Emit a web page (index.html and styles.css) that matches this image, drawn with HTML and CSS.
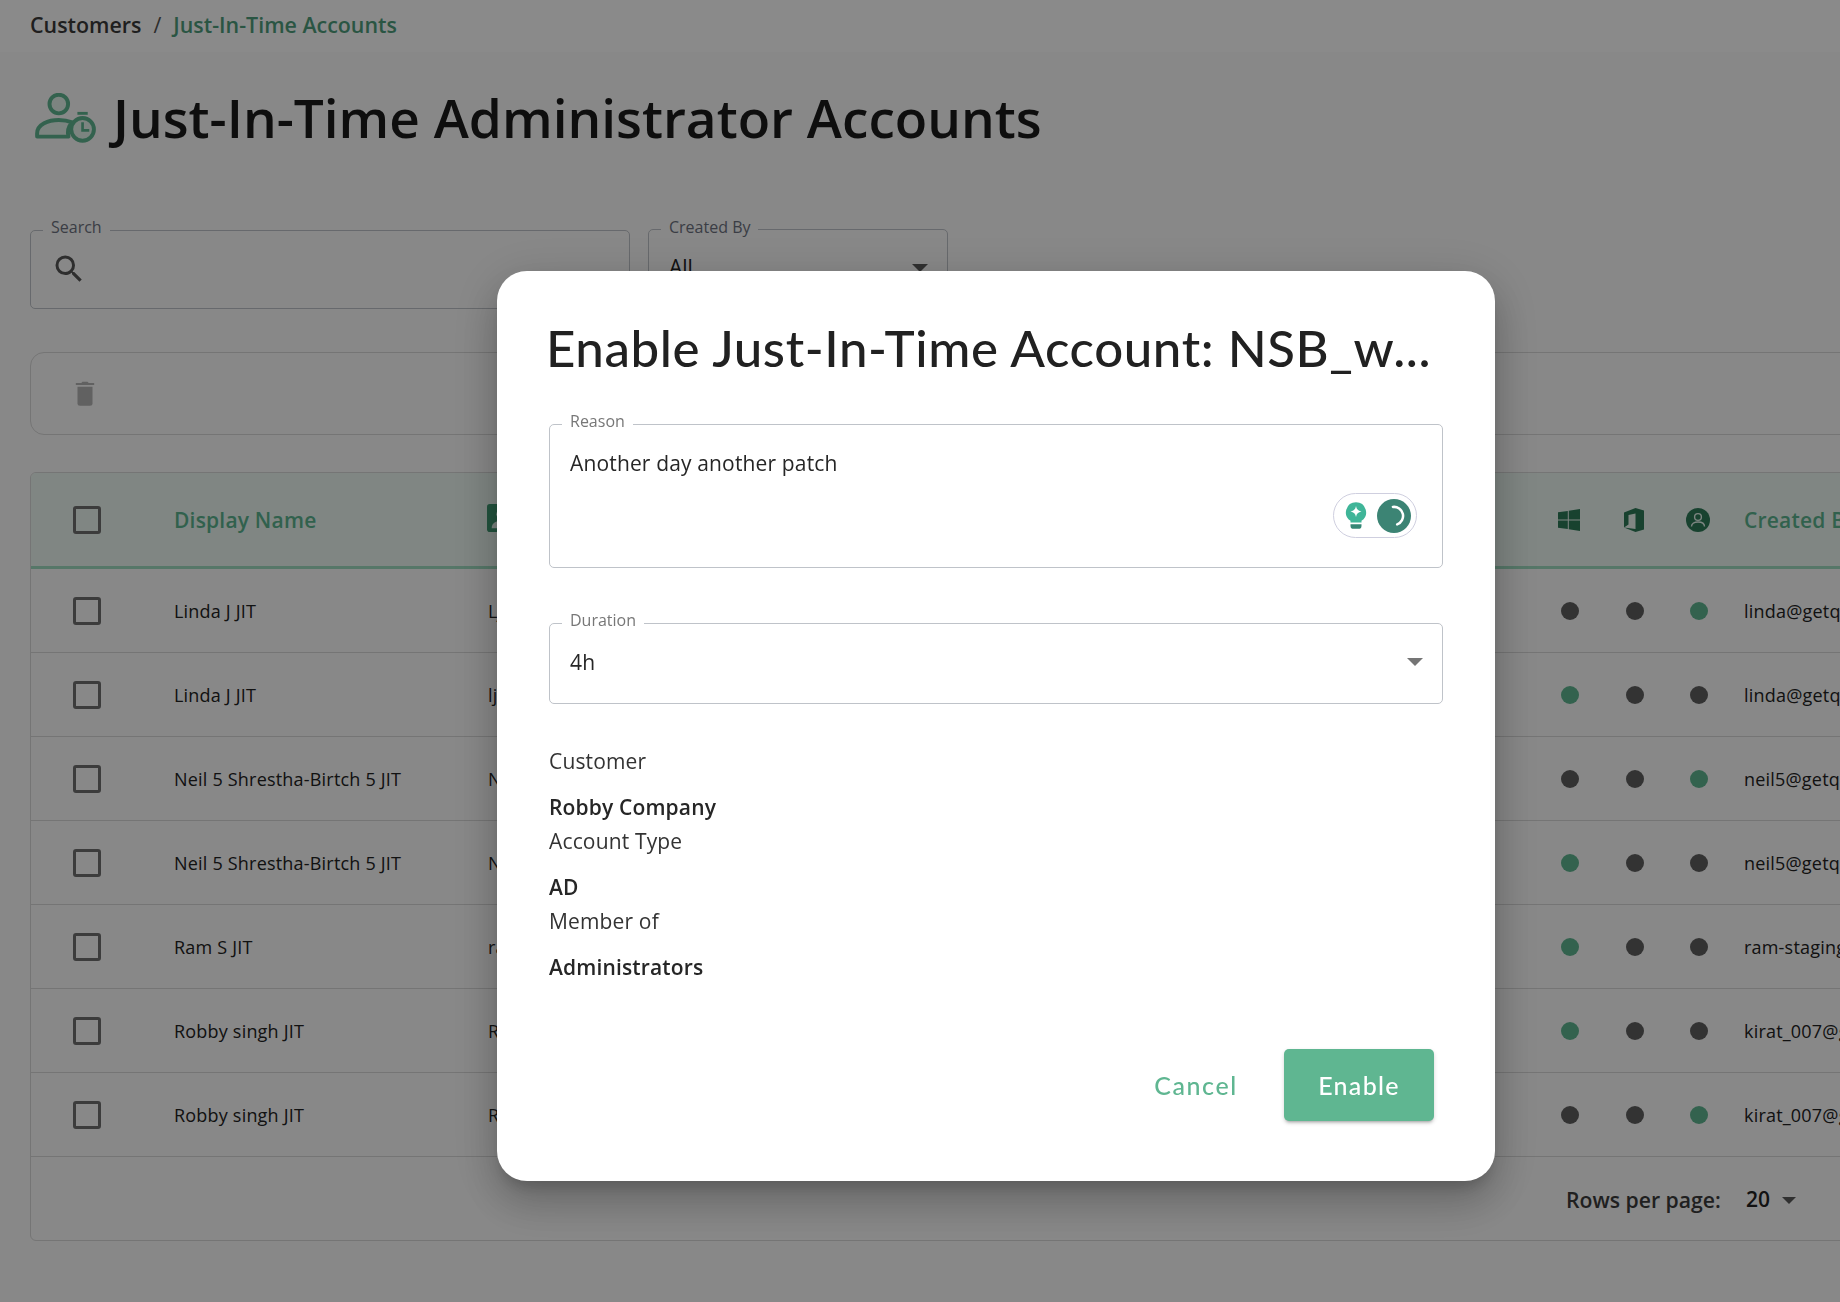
FILE: index.html
```html
<!DOCTYPE html>
<html lang="en">
<head>
<meta charset="utf-8">
<title>Just-In-Time Administrator Accounts</title>
<link rel="stylesheet" href="styles.css">
</head>
<body>
<div class="page">
  <nav class="crumbs"><span>Customers</span><span class="sep">/</span><span class="crumb-active">Just-In-Time Accounts</span></nav>
  <main class="content">
    <header class="heading">
      <svg class="heading-icon" viewBox="0 0 60 48" fill="none" stroke="#5fb691" stroke-width="3.8">
        <circle cx="24" cy="10.5" r="9" fill="#e6f4ed"/>
        <path d="M3 42v-3c0-9 11-13 21-13 5 0 9 .8 13 2.300-3.500 3.700-5 8.500-3.600 13.700H3.500z" fill="#e6f4ed" stroke-linejoin="round"/>
        <circle cx="47" cy="35" r="11" fill="#e6f4ed"/>
        <path d="M47 28v8h6.500" stroke-width="2.600"/>
        <path d="M42 19.500h10" stroke-width="2.800"/>
      </svg>
      <h1>Just-In-Time Administrator Accounts</h1>
    </header>
    <section class="filters">
      <fieldset class="field field-search">
        <legend>Search</legend>
        <svg class="search-icon" viewBox="0 0 24 24"><path d="M15.500 14h-.79l-.28-.27A6.470 6.470 0 0 0 16 9.500 6.500 6.500 0 1 0 9.500 16c1.610 0 3.090-.59 4.230-1.570l.27.28v.79l5 4.990L20.490 19l-4.990-5zm-6 0C7.010 14 5 11.990 5 9.500S7.010 5 9.500 5 14 7.010 14 9.500 11.990 14 9.500 14z"/></svg>
      </fieldset>
      <fieldset class="field field-created">
        <legend>Created By</legend>
        <span class="select-value">All</span>
        <span class="caret caret-dark"></span>
      </fieldset>
    </section>
    <section class="toolbar">
      <svg class="trash" viewBox="0 0 24 32"><path d="M3 9h18v20a3 3 0 0 1-3 3H6a3 3 0 0 1-3-3z"/><path d="M1 4.500h6.500L9 3h6l1.500 1.500H23V7H1z"/></svg>
    </section>
    <section class="table">
      <div class="row row-head">
        <span class="box"></span>
        <span class="c-name">Display Name</span>
        <span class="c-user"><svg class="contact" viewBox="0 0 30 30"><rect width="30" height="30" rx="3"/><circle cx="15" cy="11" r="5" fill="#e8f6ef"/><path d="M5 26c0-6 5-8 10-8s10 2 10 8z" fill="#e8f6ef"/></svg></span>
        <span class="c-dot"><svg class="head-icon" viewBox="0 0 22 22"><path d="M0 3.300 9.800 2v8.500H0zM10.800 1.800 22 0v10.500H10.800zM0 11.500h9.800V20L0 18.700zM10.800 11.500H22V22l-11.200-1.800z"/></svg></span>
        <span class="c-dot"><svg class="head-icon head-office" viewBox="0 0 20 24"><path d="M0 4.500 11.500 0 20 2.500v19L11.500 24 0 19.500l11.500 1.500V5.500L4.500 7v9.500L0 19.500z"/></svg></span>
        <span class="c-dot"><svg class="head-icon head-person" viewBox="0 0 24 24"><circle cx="12" cy="12" r="12"/><circle cx="12" cy="9" r="3.400" fill="none" stroke="#e8f6ef" stroke-width="1.400"/><path d="M5.500 18.500c0-3 3-4.500 6.500-4.500s6.500 1.500 6.500 4.500" fill="none" stroke="#e8f6ef" stroke-width="1.400"/></svg></span>
        <span class="c-by">Created By</span>
      </div>
      <div class="row"><span class="box"></span><span class="c-name">Linda J JIT</span><span class="c-user">Lj_jit</span><span class="c-dot"><i class="dot"></i></span><span class="c-dot"><i class="dot"></i></span><span class="c-dot"><i class="dot on"></i></span><span class="c-by">linda@getquantum.io</span></div>
      <div class="row"><span class="box"></span><span class="c-name">Linda J JIT</span><span class="c-user">lj_jit</span><span class="c-dot"><i class="dot on"></i></span><span class="c-dot"><i class="dot"></i></span><span class="c-dot"><i class="dot"></i></span><span class="c-by">linda@getquantum.io</span></div>
      <div class="row"><span class="box"></span><span class="c-name">Neil 5 Shrestha-Birtch 5 JIT</span><span class="c-user">N5_jit</span><span class="c-dot"><i class="dot"></i></span><span class="c-dot"><i class="dot"></i></span><span class="c-dot"><i class="dot on"></i></span><span class="c-by">neil5@getquantum.io</span></div>
      <div class="row"><span class="box"></span><span class="c-name">Neil 5 Shrestha-Birtch 5 JIT</span><span class="c-user">N5_jit</span><span class="c-dot"><i class="dot on"></i></span><span class="c-dot"><i class="dot"></i></span><span class="c-dot"><i class="dot"></i></span><span class="c-by">neil5@getquantum.io</span></div>
      <div class="row"><span class="box"></span><span class="c-name">Ram S JIT</span><span class="c-user">ram_jit</span><span class="c-dot"><i class="dot on"></i></span><span class="c-dot"><i class="dot"></i></span><span class="c-dot"><i class="dot"></i></span><span class="c-by">ram-staging@getquantum.io</span></div>
      <div class="row"><span class="box"></span><span class="c-name">Robby singh JIT</span><span class="c-user">Robby_jit</span><span class="c-dot"><i class="dot on"></i></span><span class="c-dot"><i class="dot"></i></span><span class="c-dot"><i class="dot"></i></span><span class="c-by">kirat_007@getquantum.io</span></div>
      <div class="row"><span class="box"></span><span class="c-name">Robby singh JIT</span><span class="c-user">Robby_jit</span><span class="c-dot"><i class="dot"></i></span><span class="c-dot"><i class="dot"></i></span><span class="c-dot"><i class="dot on"></i></span><span class="c-by">kirat_007@getquantum.io</span></div>
      <div class="pager"><span class="pager-label">Rows per page:</span><span class="pager-value">20</span><span class="caret caret-dark"></span></div>
    </section>
  </main>
</div>
<div class="scrim">
  <div class="dialog">
    <h2>Enable Just-In-Time Account: NSB_w...</h2>
    <fieldset class="field field-reason">
      <legend>Reason</legend>
      <p class="field-text">Another day another patch</p>
      <div class="assist">
        <svg class="bulb" viewBox="0 0 24 30"><path d="M12 0a11 11 0 0 0-6 20.200V22h12v-1.800A11 11 0 0 0 12 0z" fill="#3fb598"/><path d="M12 4c.7 3.700 2.300 5.300 6 6-3.700.7-5.300 2.300-6 6-.7-3.700-2.300-5.300-6-6 3.700-.7 5.300-2.300 6-6z" fill="#fff"/><path d="M6 24h12v1.500a3.500 3.500 0 0 1-3.500 3.500h-5A3.500 3.500 0 0 1 6 25.500z" fill="#358775"/></svg>
        <svg class="spin" viewBox="0 0 32 32"><circle cx="16" cy="16" r="16" fill="#3c8474"/><path d="M15 7.500a8.500 8.500 0 0 1 4 16.400" fill="none" stroke="#fff" stroke-width="2.400" stroke-linecap="round"/></svg>
      </div>
    </fieldset>
    <fieldset class="field field-duration">
      <legend>Duration</legend>
      <span class="field-text">4h</span>
      <span class="caret"></span>
    </fieldset>
    <dl class="facts">
      <dt>Customer</dt><dd>Robby Company</dd>
      <dt>Account Type</dt><dd>AD</dd>
      <dt>Member of</dt><dd>Administrators</dd>
    </dl>
    <div class="actions">
      <button class="btn btn-text" type="button">Cancel</button>
      <button class="btn btn-primary" type="button">Enable</button>
    </div>
  </div>
</div>
</body>
</html>
```
FILE: styles.css
```css
* { box-sizing: border-box; }
html, body { margin: 0; height: 100%; overflow: hidden; }
body { font-family: "Open Sans", "Noto Sans", sans-serif; color: #212121; background: #fbfbfb; }

.page { width: 1840px; height: 1302px; overflow: hidden; }

.crumbs { height: 52px; padding-top: 10px; background: #fff; display: flex; gap: 12px; padding-left: 30px; font-size: 21.400px; line-height: 30px; font-weight: 600; color: #3a3a3a; align-items: flex-start; }
.crumbs .sep { color: #555; font-weight: 400; }
.crumb-active { color: #4e9e7c; }

.content { padding: 0 0 0 30px; width: 2300px; }

.heading { height: 178px; display: flex; align-items: flex-start; padding-top: 33px; }
.heading-icon { width: 62px; height: 50px; margin: 8px 17px 0 4px; flex: none; }
h1 { margin: 0; font-size: 53.150px; line-height: 66px; font-weight: 600; color: #1a1a1a; }

.field { margin: 0; border: 1px solid #bfc3c9; border-radius: 5px; position: relative; min-inline-size: 0; padding: 0 20px; }
.field legend { position: relative; top: -3px; font-size: 16px; line-height: 15px; color: #6d7280; padding: 0 8px; margin-left: -8px; }

.filters { display: flex; gap: 18px; height: 122px; align-items: flex-start; }
.field-search { width: 600px; height: 86px; margin-top: -7px; }
.search-icon { width: 36px; height: 36px; fill: #555; position: absolute; left: 20px; top: 13px; }
.field-created { width: 300px; height: 87px; margin-top: -8px; }
.field-created legend { top: -2px; }
.select-value { position: absolute; left: 20px; top: 16px; font-size: 21px; }
.caret { position: absolute; right: 20px; top: 36px; width: 0; height: 0; border-left: 8px solid transparent; border-right: 8px solid transparent; border-top: 8px solid #757575; }
.field-created .caret { top: 27px; right: 19px; }
.caret-dark { border-top-color: #5a5a5a; }

.toolbar { width: 2200px; height: 83px; border: 1px solid #d8d8d8; border-radius: 14px; margin-bottom: 37px; display: flex; align-items: center; padding-left: 44px; }
.trash { width: 20px; height: 27px; fill: #b4b4b4; margin-top: -2px; }

.table { width: 2200px; border: 1px solid #d8d8d8; border-radius: 6px; overflow: hidden; height: 769px; }
.row { height: 84px; display: grid; grid-template-columns: 143px 312px 1052px 65px 65px 63px 1fr; align-items: center; border-bottom: 1px solid #d8d8d8; font-size: 18px; letter-spacing: .2px; color: #222; }
.row-head { height: 96px; background: #ecf8f2; border-bottom: 3px solid #9fdcc0; font-size: 21px; font-weight: 600; color: #5bb48f; }
.box { display: block; width: 28px; height: 28px; margin-left: 42px; border: 3px solid #707070; border-radius: 3px; }
.c-user { white-space: nowrap; padding-left: 2px; }
.c-dot { display: flex; justify-content: center; align-items: center; padding-right: 2px; }
.row-head .c-dot { padding-right: 4px; }
.c-by { white-space: nowrap; padding-left: 13px; }
.dot { display: block; width: 18px; height: 18px; border-radius: 50%; background: #5f5f5f; }
.dot.on { background: #5fb691; }
.contact { width: 28px; height: 28px; fill: #3f9a72; display: block; margin: -4px 0 0 -1px; }
.head-icon { width: 22px; height: 22px; fill: #2d7a58; }
.head-office { height: 24px; }
.head-person { width: 24px; height: 24px; }

.pager { height: 84px; position: relative; font-size: 21.200px; font-weight: 600; display: flex; align-items: center; padding-left: 1535px; color: #3c3c3c; }
.pager-label { width: 180px; }
.pager-value { color: #222; font-size: 21px; width: 36px; margin-left: 0; }
.pager .caret { position: static; border-left-width: 7px; border-right-width: 7px; border-top-width: 7px; margin-top: 2px; }

.scrim { position: fixed; inset: 0; background: rgba(0,0,0,.46); }
.dialog { position: absolute; left: 497px; top: 271px; width: 998px; height: 910px; background: #fff; border-radius: 30px; padding: 0 52px; box-shadow: 0 11px 15px -7px rgba(0,0,0,.2), 0 24px 38px 3px rgba(0,0,0,.14), 0 9px 46px 8px rgba(0,0,0,.12); }
.dialog h2 { margin: 0 0 0 -3px; padding-top: 44px; height: 153px; font-family: "Lato", "Open Sans", sans-serif; font-size: 51px; line-height: 66px; font-weight: 500; color: #212121; white-space: nowrap; letter-spacing: .6px; }
.dialog .field { width: 894px; }
.dialog .field legend { color: #777; }
.field-text { margin: 0; font-size: 21px; line-height: 30px; letter-spacing: .15px; color: #262626; }
.field-reason { height: 151px; margin-bottom: 55px; padding-top: 16px; margin-top: -7px; }
.field-duration { height: 88px; padding-top: 16px; margin-top: -7px; }
.field-duration .caret { right: 19px; top: 27px; }
.assist { position: absolute; right: 25px; top: 61px; width: 84px; height: 45px; border: 1.500px solid #cfcfdf; border-radius: 23px; display: flex; align-items: center; gap: 10px; padding-left: 11px; }
.bulb { width: 22px; height: 28px; flex: none; }
.spin { width: 34px; height: 34px; flex: none; }

.facts { margin: 42px 0 0; font-size: 21px; line-height: 30px; letter-spacing: .15px; color: #333; }
.facts dt { margin: 0; height: 34px; }
.facts dd { margin: 12px 0 0; height: 34px; font-weight: 600; color: #262626; }

.actions { position: absolute; right: 61px; bottom: 60px; display: flex; align-items: center; gap: 20px; }
.btn { font-family: "Lato", "Open Sans", sans-serif; font-size: 25px; font-weight: 500; letter-spacing: 1.300px; border: 0; border-radius: 5px; height: 72px; background: none; cursor: pointer; }
.btn-text { color: #5fb691; width: 136px; padding: 0; letter-spacing: 1.600px; }
.btn-primary { color: #fff; background: #5fb691; width: 150px; padding: 0; box-shadow: 0 3px 3px -2px rgba(0,0,0,.25), 0 2px 4px rgba(0,0,0,.16); }
```
